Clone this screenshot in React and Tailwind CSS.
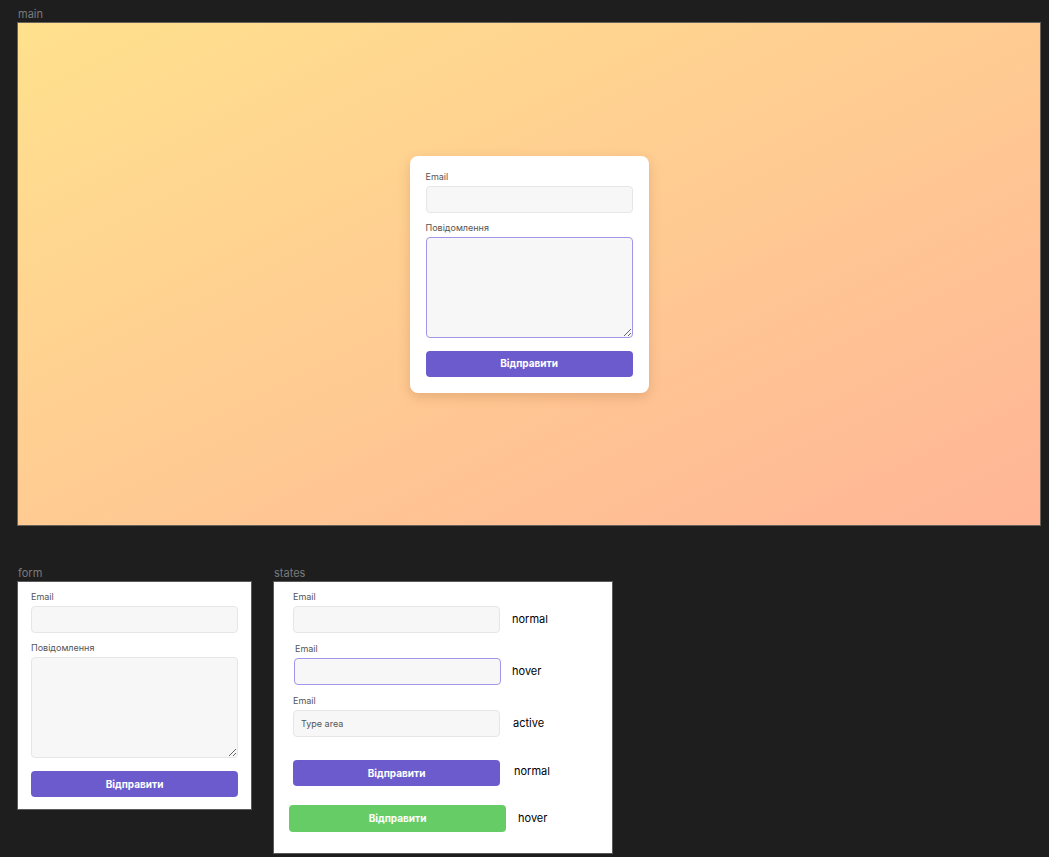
import React from 'react';

const font = { fontFamily: 'Inter, "Noto Sans", sans-serif' };

function Label({ children, className = '' }) {
    return <div className={`h-[10px] text-[9px] leading-[10px] text-[#555] mb-1 ${className}`}>{children}</div>;
}

function Field({ className = '', hover = false, children }) {
    return (
        <div className={`h-[27px] w-[207px] rounded-[4px] border bg-[#f7f7f7] flex items-center pl-[7px] text-[9px] text-[#555] ${hover ? 'border-[#a396e8]' : 'border-[#e6e6e6]'} ${className}`}>
            {children}
        </div>
    );
}

function Button({ className = '', green = false }) {
    return (
        <button className={`h-[26px] w-[207px] rounded-[4px] text-white text-[10px] font-bold ${green ? 'bg-[#66cd66]' : 'bg-[#6b5bcd]'} ${className}`}>
            Відправити
        </button>
    );
}

function ContactForm({ focused = false }) {
    return (
        <div className="flex flex-col">
            <Label>Email</Label>
            <Field />
            <Label className="mt-[10px]">Повідомлення</Label>
            <textarea
                readOnly
                className={`h-[101px] w-[207px] rounded-[4px] border bg-[#f7f7f7] outline-none ${focused ? 'border-[#a396e8]' : 'border-[#e6e6e6]'}`}
            />
            <Button className="mt-[13px]" />
        </div>
    );
}

function FrameLabel({ children }) {
    return <div className="h-[15px] text-[11px] leading-[15px] text-[#7a7a7a] pl-[1px]">{children}</div>;
}

export default function App() {
    return (
        <div className="w-[1049px] h-[857px] bg-[#1e1e1e] pt-[7px] pl-[17px] overflow-hidden" style={font}>
            <FrameLabel>main</FrameLabel>
            <div className="w-[1024px] h-[504px] border border-[#66615a] bg-gradient-to-br from-[#ffe18d] to-[#ffb596] flex items-center justify-center">
                <div className="w-[239px] bg-white rounded-[8px] p-4 shadow-[0_4px_12px_rgba(150,90,40,0.25)]">
                    <ContactForm focused />
                </div>
            </div>

            <div className="flex gap-[21px] mt-[40px]">
                <div>
                    <FrameLabel>form</FrameLabel>
                    <div className="w-[235px] h-[229px] bg-white border border-[#5a5a5a] pt-[10px] pl-[13px]">
                        <ContactForm />
                    </div>
                </div>

                <div>
                    <FrameLabel>states</FrameLabel>
                    <div className="w-[340px] h-[273px] bg-white border border-[#5a5a5a] pt-[10px] pl-[19px] text-[11px] text-black">
                        <Label>Email</Label>
                        <div className="flex items-center gap-[12px]">
                            <Field />
                            <span>normal</span>
                        </div>

                        <Label className="mt-[11px] ml-[2px]">Email</Label>
                        <div className="flex items-center gap-[11px] ml-[1px]">
                            <Field hover />
                            <span>hover</span>
                        </div>

                        <Label className="mt-[11px]">Email</Label>
                        <div className="flex items-center gap-[13px]">
                            <Field className="w-[206px]">Type area</Field>
                            <span>active</span>
                        </div>

                        <div className="flex items-start gap-[14px] mt-[23px]">
                            <Button />
                            <span className="mt-[3px]">normal</span>
                        </div>

                        <div className="flex items-center gap-[12px] mt-[19px] -ml-[4px]">
                            <Button green className="w-[217px] h-[27px]" />
                            <span>hover</span>
                        </div>
                    </div>
                </div>
            </div>
        </div>
    );
}
